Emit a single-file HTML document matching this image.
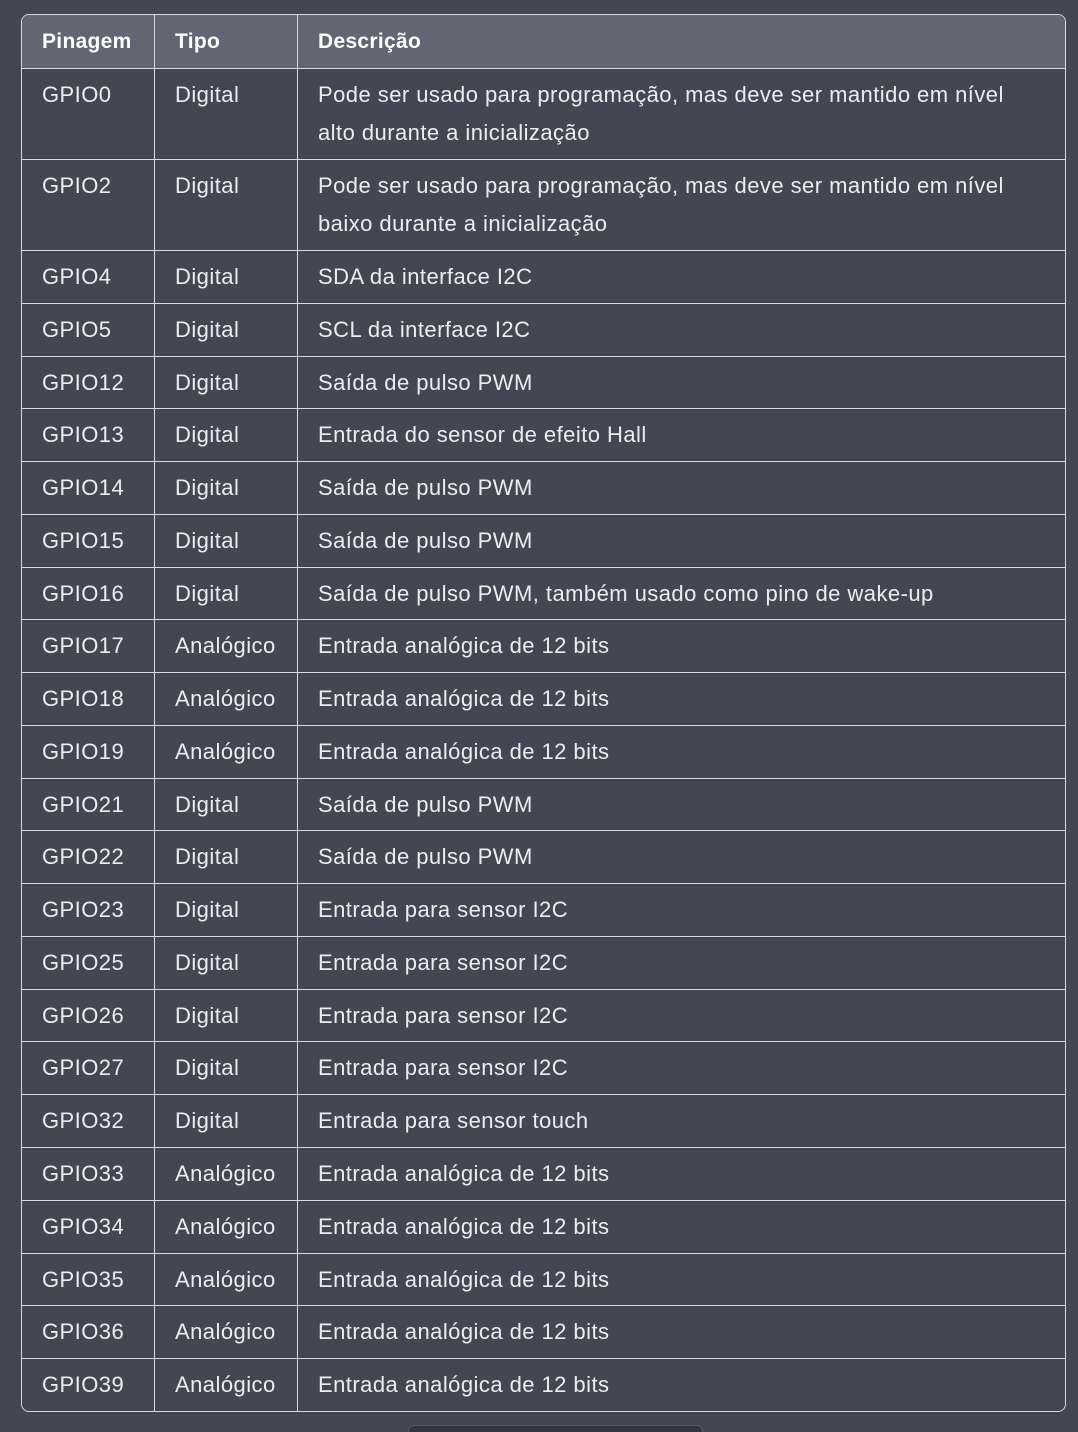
<!DOCTYPE html>
<html><head><meta charset="utf-8"><style>
html,body{margin:0;padding:0;background:#444654;width:1078px;height:1432px;overflow:hidden}
body{font-family:"Liberation Sans",Helvetica,Arial,sans-serif;color:#ececf1;font-size:22px;letter-spacing:0.45px;position:relative}
.wrap{position:absolute;left:21px;top:14px;width:1043px;height:1396px;border:1px solid #d9d9e3;border-radius:8px;overflow:hidden}
table{border-collapse:collapse;width:1045px;margin:-1px;table-layout:fixed}
td,th{border:1px solid #d9d9e3;padding:0 20px;text-align:left;vertical-align:top;line-height:38px}
th{background:#646573;color:#fff;font-weight:bold;height:53px;vertical-align:middle;font-size:21px;letter-spacing:0.3px}
td{padding-top:7px;box-sizing:border-box}
tr.s td{height:52.77px}
tr.d td{height:91px}
.btm{position:absolute;left:408px;top:1425px;width:293px;height:20px;background:#343541;border:1px solid #565869;border-radius:6px}
</style></head><body>
<div class="wrap"><table>
<colgroup><col style="width:133px"><col style="width:143px"><col></colgroup>
<tr><th>Pinagem</th><th>Tipo</th><th>Descrição</th></tr>
<tr class="d"><td>GPIO0</td><td>Digital</td><td>Pode ser usado para programação, mas deve ser mantido em nível alto durante a inicialização</td></tr>
<tr class="d"><td>GPIO2</td><td>Digital</td><td>Pode ser usado para programação, mas deve ser mantido em nível baixo durante a inicialização</td></tr>
<tr class="s"><td>GPIO4</td><td>Digital</td><td>SDA da interface I2C</td></tr>
<tr class="s"><td>GPIO5</td><td>Digital</td><td>SCL da interface I2C</td></tr>
<tr class="s"><td>GPIO12</td><td>Digital</td><td>Saída de pulso PWM</td></tr>
<tr class="s"><td>GPIO13</td><td>Digital</td><td>Entrada do sensor de efeito Hall</td></tr>
<tr class="s"><td>GPIO14</td><td>Digital</td><td>Saída de pulso PWM</td></tr>
<tr class="s"><td>GPIO15</td><td>Digital</td><td>Saída de pulso PWM</td></tr>
<tr class="s"><td>GPIO16</td><td>Digital</td><td>Saída de pulso PWM, também usado como pino de wake-up</td></tr>
<tr class="s"><td>GPIO17</td><td>Analógico</td><td>Entrada analógica de 12 bits</td></tr>
<tr class="s"><td>GPIO18</td><td>Analógico</td><td>Entrada analógica de 12 bits</td></tr>
<tr class="s"><td>GPIO19</td><td>Analógico</td><td>Entrada analógica de 12 bits</td></tr>
<tr class="s"><td>GPIO21</td><td>Digital</td><td>Saída de pulso PWM</td></tr>
<tr class="s"><td>GPIO22</td><td>Digital</td><td>Saída de pulso PWM</td></tr>
<tr class="s"><td>GPIO23</td><td>Digital</td><td>Entrada para sensor I2C</td></tr>
<tr class="s"><td>GPIO25</td><td>Digital</td><td>Entrada para sensor I2C</td></tr>
<tr class="s"><td>GPIO26</td><td>Digital</td><td>Entrada para sensor I2C</td></tr>
<tr class="s"><td>GPIO27</td><td>Digital</td><td>Entrada para sensor I2C</td></tr>
<tr class="s"><td>GPIO32</td><td>Digital</td><td>Entrada para sensor touch</td></tr>
<tr class="s"><td>GPIO33</td><td>Analógico</td><td>Entrada analógica de 12 bits</td></tr>
<tr class="s"><td>GPIO34</td><td>Analógico</td><td>Entrada analógica de 12 bits</td></tr>
<tr class="s"><td>GPIO35</td><td>Analógico</td><td>Entrada analógica de 12 bits</td></tr>
<tr class="s"><td>GPIO36</td><td>Analógico</td><td>Entrada analógica de 12 bits</td></tr>
<tr class="s"><td>GPIO39</td><td>Analógico</td><td>Entrada analógica de 12 bits</td></tr>
</table></div>
<div class="btm"></div>
</body></html>
